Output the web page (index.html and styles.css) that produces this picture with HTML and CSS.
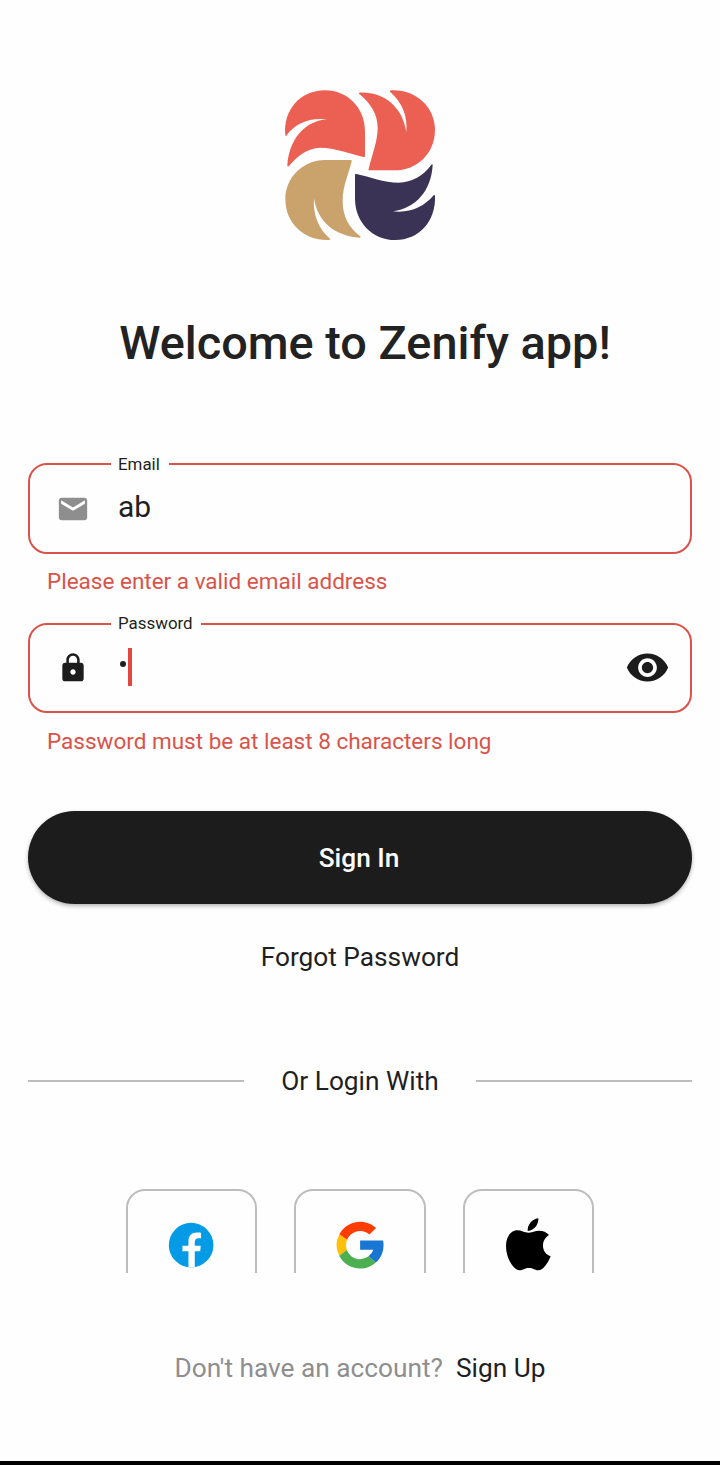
FILE: index.html
```html
<!DOCTYPE html>
<html lang="en">
<head>
<meta charset="utf-8">
<title>Zenify – Sign In</title>
<link rel="stylesheet" href="styles.css">
</head>
<body>
<main class="screen">
  <svg class="logo" viewBox="0 0 510 510" aria-label="Zenify">
    <path fill="#eb6053" d="M31 166C24 90 76 31 150 31C218 31 270 84 270 154V229Q270 232 266 231C225 222 180 203 136 203C96 204 66 229 41 259Q38 261 37 257C42 180 86 125 155 118C105 112 61 129 34 167Q32 169 31 166Z"/>
    <path fill="#eb6053" d="M253 38C325 34 382 79 394 156C398 109 383 68 345 35Q343 32 348 31C422 27 480 81 480 149C480 220 427 271 357 271H282Q279 271 281 267C290 228 308 184 308 144C308 102 287 70 253 42Q250 39 253 38Z"/>
    <path fill="#c9a26c" d="M228 240Q231 240 230 244C221 282 203 318 203 362C203 410 222 442 256 469Q259 473 254 473C180 468 128 427 117 355C113 402 130 447 165 476Q168 480 162 480C88 483 31 430 31 358C31 293 84 240 151 240Z"/>
    <path fill="#3b3356" d="M240 284Q240 281 244 282C286 291 326 308 371 308C411 307 445 287 469 254Q473 251 473 256C468 332 424 385 354 394C404 400 447 381 476 346Q480 343 480 348C483 424 432 480 361 480C292 480 240 426 240 356Z"/>
  </svg>
  <h1 class="title">Welcome to Zenify app!</h1>

  <form class="form">
    <fieldset class="field">
      <legend class="label">Email</legend>
      <svg class="lead mail" viewBox="0 0 24 24" fill="#8e8e8e"><path d="M20 4H4c-1.100 0-1.990.9-1.990 2L2 18c0 1.100.9 2 2 2h16c1.100 0 2-.9 2-2V6c0-1.100-.9-2-2-2zm.4 4.300L12 13.300 3.600 8.300V5.900l8.400 5 8.400-5v2.400z"/></svg>
      <span class="value">ab</span>
    </fieldset>
    <p class="error">Please enter a valid email address</p>
    <fieldset class="field password">
      <legend class="label">Password</legend>
      <svg class="lead" viewBox="0 0 24 24" fill="#1c1c1c"><path d="M18 8h-1V6c0-2.760-2.240-5-5-5S7 3.240 7 6v2H6c-1.100 0-2 .9-2 2v10c0 1.100.9 2 2 2h12c1.100 0 2-.9 2-2V10c0-1.100-.9-2-2-2zm-6 9c-1.100 0-2-.9-2-2s.9-2 2-2 2 .9 2 2-.9 2-2 2zm3.100-9H8.900V6c0-1.710 1.390-3.100 3.100-3.100s3.100 1.390 3.100 3.100v2z"/></svg>
      <span class="value secret"><i class="dot"></i><i class="caret"></i></span>
      <svg class="eye" viewBox="0 0 24 24" fill="#1c1c1c"><path d="M12 4.500C7 4.500 2.730 7.610 1 12c1.730 4.390 6 7.500 11 7.500s9.270-3.110 11-7.500c-1.730-4.390-6-7.500-11-7.500zM12 17c-2.760 0-5-2.240-5-5s2.240-5 5-5 5 2.240 5 5-2.240 5-5 5zm0-8c-1.660 0-3 1.340-3 3s1.340 3 3 3 3-1.340 3-3-1.340-3-3-3z"/></svg>
    </fieldset>
    <p class="error">Password must be at least 8 characters long</p>
    <button class="signin" type="button">Sign In</button>
  </form>
  <a class="forgot">Forgot Password</a>

  <div class="divider"><span class="divider-text">Or Login With</span></div>

  <div class="socials">
    <div class="social">
      <svg class="brand" viewBox="0 0 48 48"><circle cx="24" cy="24" r="19" fill="#039be5"/><path fill="#fff" d="M27.100 29.300h4.650l.45-4.700h-5.100v-2.600c0-2.400.9-3.900 3-3.900h2.400v-4.700c-.7-.1-1.600-.2-3.300-.2-4.700 0-7.500 2.600-7.500 7.700v3.700h-5.100v4.700h5.100v13.500c.9.130 1.600.2 2.500.2.900 0 2-.1 2.900-.25z"/></svg>
    </div>
    <div class="social">
      <svg class="brand" viewBox="0 0 48 48"><path fill="#ffc107" d="M6.306 14.691l6.571 4.819A12 12 0 0 0 12.717 28.130l-6.522 5.025A20 20 0 0 1 6.306 14.691z"/><path fill="#ff3d00" d="M6.306 14.691l6.571 4.819C14.655 15.108 18.961 12 24 12c3.059 0 5.842 1.154 7.961 3.039l5.657-5.657C34.046 6.053 29.268 4 24 4 16.318 4 9.656 8.337 6.306 14.691z"/><path fill="#4caf50" d="M24 44c5.166 0 9.860-1.977 13.409-5.192l-6.190-5.238A11.910 11.910 0 0 1 24 36c-5.202 0-9.619-3.317-11.283-7.946l-6.522 5.025C9.505 39.556 16.227 44 24 44z"/><path fill="#1976d2" d="M43.611 20.083H42V20H24v8h11.303a12.040 12.040 0 0 1-4.087 5.571l6.193 5.237C36.971 39.205 44 34 44 24c0-1.341-.138-2.650-.389-3.917z"/></svg>
    </div>
    <div class="social">
      <svg class="apple" viewBox="537 105 180 180"><path d="M625 158C612 158 605 151 592 151C572 151 558 172 558 198C558 235 580 270 599 271C609 271 614 264 627 264C640 264 645 271 655 271C670 271 685 247 692 229C677 223 669 211 669 197C669 183 676 172 687 165C680 156 669 152 658 152C645 152 635 158 625 158Z"/><path d="M623 153C622 135 635 118 655 115C656 132 645 151 623 153Z"/></svg>
    </div>
  </div>

  <p class="signup"><span class="muted">Don't have an account?</span><a class="signup-link">Sign Up</a></p>
</main>
</body>
</html>
```
FILE: styles.css
```css
* { box-sizing: border-box; }

body {
  margin: 0;
  background: #fefefe;
  color: #1f1f21;
  font-family: Roboto, "Liberation Sans", sans-serif;
}

.screen {
  display: flex;
  flex-direction: column;
  align-items: center;
  height: 1465px;
  padding: 80px 28px 0;
  border-bottom: 4px solid #000;
  overflow: hidden;
}

svg { display: block; flex: none; }

.logo { width: 170px; height: 170px; }

.title {
  margin: 65px 0 0;
  padding-left: 10px;
  color: #222;
  font-size: 46.850px;
  line-height: 56px;
  font-weight: 500;
  white-space: nowrap;
}

.form { width: 100%; margin-top: 83px; }

.field {
  display: flex;
  align-items: center;
  height: 99.500px;
  min-width: 0;
  margin: 0;
  padding: 0 20.500px 10px 27px;
  border: 2px solid #d9534a;
  border-radius: 19px;
}

.label {
  height: 20px;
  margin-left: 54px;
  padding: 0 9px 0 7px;
  font-size: 16.900px;
  line-height: 20px;
}

.password .label { padding-right: 8px; line-height: 18px; }

.lead { width: 32px; height: 32px; margin-top: 1px; }

.mail { width: 34px; height: 34px; margin: 3px -1px 0; }

.value {
  flex: 1;
  margin: -1px 0 0 29px;
  font-size: 30px;
  line-height: 36px;
}

.secret { display: flex; align-items: center; }

.dot {
  width: 6px;
  height: 6px;
  margin: -5px 2px 0 2px;
  border-radius: 50%;
  background: #1f1f21;
}

.caret { width: 4px; height: 38px; background: #e2483d; }

.eye { width: 45px; height: 45px; margin-top: 1px; }

.error {
  height: 60px;
  margin: 0;
  padding: 14.500px 0 0 19px;
  color: #d9534a;
  font-size: 22.500px;
  line-height: 26px;
}

.password + .error { padding-top: 15px; }

.signin {
  display: block;
  width: 100%;
  height: 93px;
  margin-top: 38px;
  padding: 0 2px 0 0;
  border: 0;
  border-radius: 47px;
  background: #1c1c1c;
  box-shadow: 0 2px 4px rgba(0, 0, 0, .3);
  color: #fff;
  font: 500 26.250px/30px Roboto, sans-serif;
}

.forgot { margin-top: 38px; font-size: 26.250px; line-height: 30px; }

.divider {
  display: flex;
  align-items: center;
  gap: 37.500px;
  width: 100%;
  margin-top: 94px;
  font-size: 26.250px;
  line-height: 30px;
}

.divider::before,
.divider::after {
  content: "";
  flex: 1;
  height: 2px;
  background: #bdbdbd;
}

.socials {
  display: flex;
  gap: 37.500px;
  height: 84px;
  margin-top: 93px;
  overflow: hidden;
}

.social {
  display: flex;
  justify-content: center;
  width: 131.250px;
  height: 112px;
  padding-top: 26.250px;
  border: 2px solid #bdbdbd;
  border-radius: 19px;
}

.brand { width: 56.250px; height: 56.250px; }

.apple { width: 60px; height: 60px; margin-top: -2.250px; }

.signup {
  display: flex;
  gap: 13px;
  margin: 80px 0 0;
  font-size: 26.250px;
  line-height: 30px;
}

.muted { color: #8e8e8e; }
```
